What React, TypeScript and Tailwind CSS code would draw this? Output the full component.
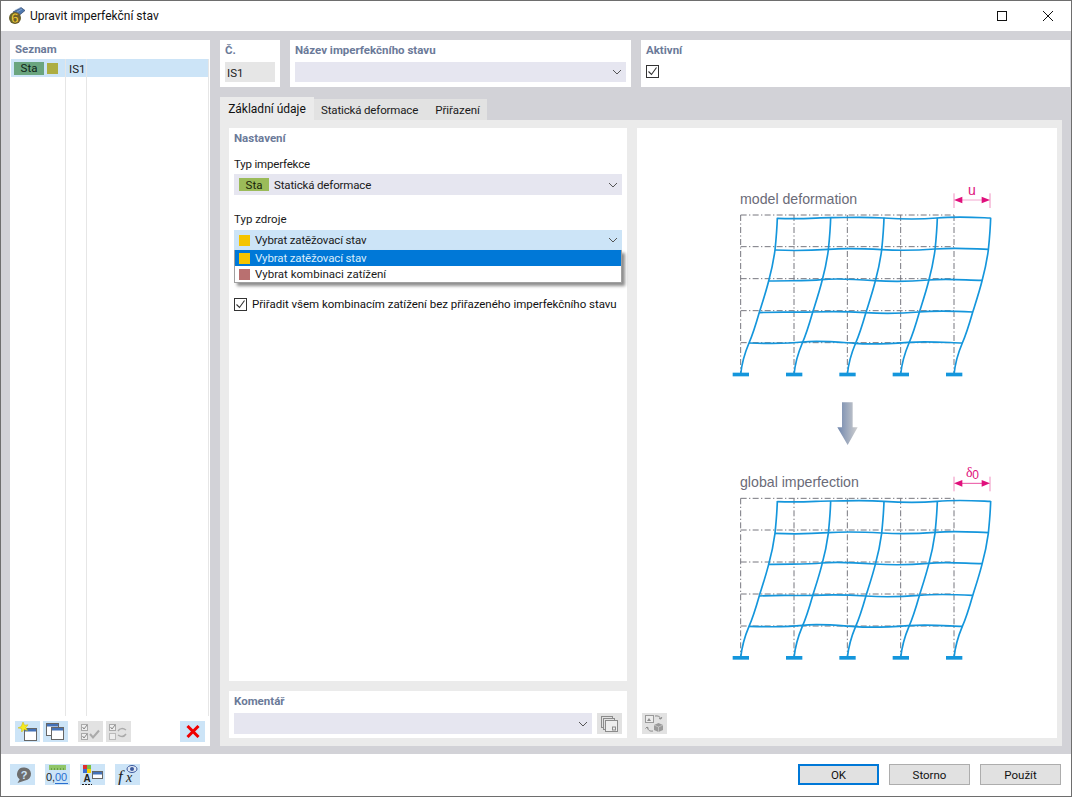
import { ReactNode } from 'react'

const FONT = 'font-["Roboto",sans-serif]'

const Chevron = () => (
  <svg width="10" height="6" viewBox="0 0 10 6" className="shrink-0">
    <path d="M1 1l4 4 4-4" fill="none" stroke="#555" strokeWidth="1" />
  </svg>
)

const Check = ({ className = '' }: { className?: string }) => (
  <div className={`w-[13px] h-[13px] border border-[#333] bg-white flex items-center justify-center shrink-0 ${className}`}>
    <svg width="11" height="11" viewBox="0 0 11 11">
      <path d="M1.5 5.5l3 3 5-7" fill="none" stroke="#333" strokeWidth="1.1" />
    </svg>
  </div>
)

const Swatch = ({ color }: { color: string }) => (
  <span className="w-[11px] h-[11px] shrink-0" style={{ backgroundColor: color }} />
)

const Panel = ({ title, className, children }: { title: string; className: string; children?: ReactNode }) => (
  <div className={`bg-white px-[5px] ${className}`}>
    <div className="h-[22px] pb-[3px] flex items-center font-bold text-[#6b7a99]">{title}</div>
    {children}
  </div>
)

const IconButton = ({ children, disabled, className = '' }: { children: ReactNode; disabled?: boolean; className?: string }) => (
  <div className={`w-[25px] h-[21px] flex items-center justify-center shrink-0 ${disabled ? 'bg-[#e2e2e2]' : 'bg-[#cce4f7]'} ${className}`}>
    {children}
  </div>
)

const Win = ({ x, y, w = 12, h = 12, stroke = '#666' }: { x: number; y: number; w?: number; h?: number; stroke?: string }) => (
  <g>
    <rect x={x + 0.5} y={y + 0.5} width={w} height={h} fill="#fff" stroke={stroke} />
    <rect x={x + 1} y={y + 1} width={w - 1} height="2.5" fill={stroke === '#666' ? '#4472b8' : '#b5b5b5'} />
  </g>
)

const NewIcon = () => (
  <svg width="21" height="19" viewBox="0 0 21 19">
    <Win x={7} y={6} />
    <path d="M6 0l1.500 3.200 3.500-.4-2.200 2.700 1.700 3-3.400-1-2.400 2.500-.2-3.500L1 5.900l3.200-1.300z" fill="#f5ea20" stroke="#cdb900" strokeWidth=".5" />
  </svg>
)

const CopyIcon = () => (
  <svg width="21" height="19" viewBox="0 0 21 19">
    <Win x={1} y={1} />
    <Win x={6} y={5} />
  </svg>
)

const CheckAllIcon = () => (
  <svg width="21" height="18" viewBox="0 0 21 18">
    <rect x="1.500" y="1.500" width="6" height="6" fill="#eee" stroke="#aaa" />
    <rect x="1.500" y="10.500" width="6" height="6" fill="#eee" stroke="#aaa" />
    <path d="M2.500 4l1.500 2 3-4M2.500 13l1.500 2 3-4" fill="none" stroke="#888" />
    <path d="M10 11l3 3.500 6-7" fill="none" stroke="#aaa" strokeWidth="2" />
  </svg>
)

const SwapIcon = () => (
  <svg width="21" height="18" viewBox="0 0 21 18">
    <rect x="1.500" y="1.500" width="6" height="6" fill="#eee" stroke="#aaa" />
    <rect x="1.500" y="10.500" width="6" height="6" fill="#eee" stroke="#bbb" />
    <path d="M2.500 4l1.500 2 3-4" fill="none" stroke="#888" />
    <path d="M10 8c2-3 5-3 8-1M18 11c-2 3-5 3-8 1" fill="none" stroke="#aaa" strokeWidth="1.500" />
  </svg>
)

const DeleteIcon = () => (
  <svg width="14" height="13" viewBox="0 0 14 13">
    <path d="M1.500 1l11 11M12.500 1l-11 11" stroke="#f00000" strokeWidth="3" />
  </svg>
)

const HelpIcon = () => (
  <svg width="18" height="18" viewBox="0 0 18 18">
    <path d="M10 1.500a6.500 6.500 0 0 1 1 13l-7.500 2.500 2.200-3.800A6.500 6.500 0 0 1 10 1.500z" fill="#6e6e6e" />
    <text x="10" y="12.500" textAnchor="middle" fontSize="11" fontWeight="700" fill="#cce4f7" fontFamily="Liberation Sans, sans-serif">?</text>
  </svg>
)

const UnitsIcon = () => (
  <svg width="25" height="20" viewBox="0 0 25 20">
    <rect x="4" y="0" width="17" height="5" fill="#90c66a" />
    <path d="M6.500 3v2M9.500 3v2M12.500 3v2M15.500 3v2M18.500 3v2" stroke="#6a9c48" />
    <text x="1" y="16" fontSize="11" fill="#222" fontFamily="Liberation Sans, sans-serif">0,</text>
    <text x="10" y="16" fontSize="11" fill="#2a6fd0" fontFamily="Liberation Sans, sans-serif">00</text>
    <path d="M10 18.500h13" stroke="#2a6fd0" />
  </svg>
)

const ColorsIcon = () => (
  <svg width="23" height="20" viewBox="0 0 23 20">
    <rect x="2" y="0" width="4" height="4" fill="#e03030" />
    <rect x="6" y="0" width="4" height="4" fill="#7ac143" />
    <rect x="2" y="4" width="4" height="4" fill="#3b6fd4" />
    <rect x="6" y="4" width="4" height="4" fill="#f5d000" />
    <Win x={11} y={6} w={10} h={7} />
    <text x="6" y="17" textAnchor="middle" fontSize="10" fontWeight="700" fill="#222" fontFamily="Liberation Sans, sans-serif">A</text>
    <path d="M1 19.500h10" stroke="#222" strokeDasharray="2 1" />
  </svg>
)

const FormulaIcon = () => (
  <svg width="23" height="21" viewBox="0 0 23 21">
    <text x="2" y="18" fontSize="17" fontStyle="italic" fill="#222" fontFamily="Liberation Serif, serif">f</text>
    <text x="10" y="18" fontSize="14" fontStyle="italic" fill="#222" fontFamily="Liberation Serif, serif">x</text>
    <ellipse cx="16" cy="5" rx="5" ry="3.500" fill="#dfe8f5" stroke="#3d5a9e" />
    <circle cx="16" cy="5" r="2" fill="#3d5a9e" />
  </svg>
)

const CopyDisabledIcon = () => (
  <svg width="19" height="18" viewBox="0 0 19 18">
    <rect x="1.500" y="1.500" width="11" height="11" fill="#e2e2e2" stroke="#8c8c8c" />
    <rect x="3.500" y="3.500" width="11" height="11" fill="#e2e2e2" stroke="#8c8c8c" />
    <rect x="5.500" y="5.500" width="12" height="11" fill="#eee" stroke="#8c8c8c" />
    <rect x="12.500" y="12" width="3" height="3" fill="none" stroke="#8c8c8c" />
  </svg>
)

const ResetViewIcon = () => (
  <svg width="21" height="19" viewBox="0 0 21 19">
    <rect x="1.500" y="1.500" width="8" height="7" fill="#ededed" stroke="#9a9a9a" />
    <path d="M3 7l2-3 2 3z" fill="#8c8c8c" />
    <path d="M11 2c3-.5 5 .5 6 3M17 5l-2-.5M17 5l.8-2" fill="none" stroke="#8c8c8c" />
    <path d="M9 17c-3 .500-5-.500-6-4M3 13l-1.500 1.500M3 13l1.700 1.300" fill="none" stroke="#8c8c8c" />
    <path d="M10 11l4.500-2 4.500 2v5l-4.500 2-4.500-2z" fill="#9a9a9a" />
    <path d="M10 11l4.500 2 4.500-2M14.500 13v5" fill="none" stroke="#d0d0d0" strokeWidth=".7" />
  </svg>
)

const AppIcon = () => (
  <svg width="18" height="18" viewBox="0 0 18 18">
    <path d="M5 5l8-4.500 4 3-6 5z" fill="#4f78ae" stroke="#2f4468" strokeWidth=".7" />
    <path d="M7 3l6-2.500M9 5l5-3" stroke="#a8c4e4" strokeWidth=".6" />
    <circle cx="7" cy="11" r="6" fill="#6a6230" />
    <text x="7" y="16" textAnchor="middle" fontSize="14" fontWeight="700" fill="#f0cb3a" stroke="#4a4218" strokeWidth=".4" fontFamily="Liberation Sans, sans-serif">6</text>
  </svg>
)

const BLUE = '#1496dc'
const columnPath = 'M62 583C66 545 76 515 87 489C100 460 110 425 118 397C128 365 138 335 146 303C155 270 161 240 165 210C168 180 171 150 172 113'

const Frame = ({ dy }: { dy: number }) => (
  <g transform={`translate(0 ${dy})`}>
    <g fill="none" stroke="#77777f" strokeWidth="3" strokeDasharray="18 7 4 7">
      {[62, 222, 382, 542, 702].map((x) => (
        <path key={x} d={`M${x} 105V583`} />
      ))}
      {[105, 200, 296, 392, 488].map((y) => (
        <path key={y} d={`M62 ${y}H702`} />
      ))}
    </g>
    <g fill="none" stroke={BLUE} strokeWidth="5">
      {[0, 160, 320, 480, 640].map((x) => (
        <path key={x} d={columnPath} transform={`translate(${x} 0)`} />
      ))}
      <path d="M172 115C250 118 290 113 332 113S430 110 491 114S590 119 651 114S760 112 812 114" />
      <path d="M165 210C230 213 280 211 325 208S430 206 485 209S580 212 645 207S750 206 805 208" />
      <path d="M146 303C210 301 260 304 305 299S410 298 465 302S570 305 625 300S730 300 786 301" />
      <path d="M118 398C190 394 230 398 277 396S380 394 437 398S540 401 597 396S700 393 758 396" />
      <path d="M87 489C150 491 200 492 247 486S350 486 405 490S510 491 565 487S670 487 727 489" />
    </g>
    <g fill={BLUE}>
      {[38, 198, 358, 518, 678].map((x) => (
        <rect key={x} x={x} y="578" width="49" height="11" />
      ))}
    </g>
  </g>
)

const Dimension = ({ y, line, tick }: { y: number; line: string; tick: string }) => (
  <g>
    <path d={`M702 ${y - 18}V${y + 26}M810 ${y - 18}V${y + 26}`} stroke={tick} strokeWidth="3" />
    <path d={`M725 ${y + 2}H788`} stroke={line} strokeWidth="3" />
    <path d={`M702 ${y + 2}l25-10v20zM810 ${y + 2}l-25-10v20z`} fill="#e0107c" />
  </g>
)

const Diagram = () => (
  <svg width="290" height="490" viewBox="0 0 870 1470" className="block">
    <defs>
      <linearGradient id="arrow" x1="0" x2="1" y1="0" y2="0">
        <stop offset="0" stopColor="#6f86ad" />
        <stop offset="1" stopColor="#cfcfcf" />
      </linearGradient>
    </defs>
    <text x="60" y="71" fontSize="42.500" fill="#6b6b78" fontFamily="Liberation Sans, sans-serif">model deformation</text>
    <Frame dy={0} />
    <Dimension y={58} line="#f4a6cf" tick="#f08fc0" />
    <text x="756" y="44" textAnchor="middle" fontSize="42" fill="#e0107c" fontFamily="Liberation Sans, sans-serif">u</text>
    <path d="M366 667H398V742H413L383 795L352 742H366Z" fill="url(#arrow)" />
    <text x="60" y="921" fontSize="42.500" fill="#6b6b78" fontFamily="Liberation Sans, sans-serif">global imperfection</text>
    <Frame dy={850} />
    <Dimension y={908} line="#ea4fa0" tick="#f08fc0" />
    <text x="738" y="892" fontSize="42" fill="#e0107c" fontFamily="Liberation Serif, serif">δ</text>
    <text x="757" y="897" fontSize="36" fill="#e0107c" fontFamily="Liberation Sans, sans-serif">0</text>
  </svg>
)

const FooterButton = ({ label, primary }: { label: string; primary?: boolean }) => (
  <div className={`w-[81px] h-[21px] flex items-center justify-center bg-[#e1e1e1] text-[#111] ${primary ? 'border-2 border-[#0078d7]' : 'border border-[#adadad]'}`}>
    {label}
  </div>
)

export default function App() {
  return (
    <div className={`w-[1072px] h-[797px] flex flex-col border border-[#6e6e6e] bg-white text-[11.5px] leading-[16px] text-[#1a1a1a] overflow-hidden whitespace-nowrap ${FONT}`}>
      {/* title bar */}
      <div className="h-[30px] flex items-center pl-[7px] shrink-0">
        <AppIcon />
        <span className="ml-[4px] text-[12px] text-[#111]">Upravit imperfekční stav</span>
        <div className="ml-auto flex items-center">
          <svg width="12" height="12" viewBox="0 0 12 12" className="mr-[34px]">
            <rect x="1.500" y="1.500" width="9" height="9" fill="none" stroke="#111" />
          </svg>
          <svg width="12" height="12" viewBox="0 0 12 12" className="mr-[17px]">
            <path d="M1 1l10 10M11 1L1 11" stroke="#111" />
          </svg>
        </div>
      </div>

      {/* main area */}
      <div className="flex-1 bg-[#d2d2d7] flex pt-[9px] pb-[8px] pl-[9px] pr-px min-h-0">
        {/* list */}
        <div className="w-[200px] bg-white flex flex-col shrink-0 mr-[10px]">
          <div className="h-[19px] px-[5px] pb-px flex items-center font-bold text-[#6b7a99]">Seznam</div>
          <div className="flex-1 relative px-px">
            <div className="h-[18px] w-[197px] bg-[#cce4f7] flex items-center pl-[3px]">
              <span className="w-[30px] h-[13px] bg-[#6aa57f] text-[#10241a] flex items-center justify-center">Sta</span>
              <span className="w-[11px] h-[11px] bg-[#adad42] ml-[3px]" />
              <span className="ml-[11px] mt-px">IS1</span>
            </div>
            <div className="absolute left-[55px] top-0 h-[657px] w-px bg-[#e6e6e6]" />
            <div className="absolute left-[76px] top-0 h-[657px] w-px bg-[#e6e6e6]" />
            <div className="absolute right-px top-0 h-[657px] w-px bg-[#e6e6e6]" />
          </div>
          <div className="h-[25px] pl-[5px] pr-[5px] flex items-start gap-[3px]">
            <IconButton><NewIcon /></IconButton>
            <IconButton><CopyIcon /></IconButton>
            <IconButton disabled className="ml-[7px]"><CheckAllIcon /></IconButton>
            <IconButton disabled><SwapIcon /></IconButton>
            <IconButton className="ml-auto"><DeleteIcon /></IconButton>
          </div>
        </div>

        {/* right side */}
        <div className="flex-1 min-w-0 flex flex-col">
          <div className="h-[47px] flex gap-[10px] shrink-0">
            <Panel title="Č." className="w-[60px]">
              <div className="h-[20px] w-[50px] bg-[#e6e6e6] flex items-center px-[2px] pt-px">IS1</div>
            </Panel>
            <Panel title="Název imperfekčního stavu" className="w-[341px]">
              <div className="h-[20px] bg-[#e6e6f0] flex items-center justify-end pr-[4px]"><Chevron /></div>
            </Panel>
            <Panel title="Aktivní" className="flex-1">
              <Check className="mt-[3px]" />
            </Panel>
          </div>

          <div className="flex h-[23px] mt-[10px] items-end shrink-0">
            <div className="h-[23px] w-[94px] bg-[#ebebeb] flex items-center justify-center text-[12px] text-[#111]">Základní údaje</div>
            <div className="h-[21px] w-[173px] bg-[#e2e2e2] flex items-center pl-[7px] gap-[17px]">
              <span className="tracking-[-0.15px]">Statická deformace</span>
              <span>Přiřazení</span>
            </div>
          </div>

          <div className="flex-1 min-h-0 w-[842px] bg-[#ebebeb] flex gap-[10px] pt-[8px] pb-[8px] pl-[9px] pr-[5px]">
            <div className="w-[398px] flex flex-col gap-[10px]">
              <Panel title="Nastavení" className="flex-1 relative">
                <div className="mt-[5px] h-[18px] flex items-center tracking-[-0.18px]">Typ imperfekce</div>
                <div className="mt-px h-[21px] bg-[#e6e6f0] flex items-center pl-[5px] pr-[4px]">
                  <span className="w-[30px] h-[13px] bg-[#9bbb59] text-[#1a2408] flex items-center justify-center">Sta</span>
                  <span className="ml-[5px] flex-1 tracking-[-0.15px]">Statická deformace</span>
                  <Chevron />
                </div>
                <div className="mt-[15px] h-[18px] flex items-center">Typ zdroje</div>
                <div className="mt-[2px] h-[20px] bg-[#cce4f7] flex items-center pl-[5px] pr-[4px]">
                  <Swatch color="#f5c400" />
                  <span className="ml-[5px] flex-1 tracking-[-0.14px]">Vybrat zatěžovací stav</span>
                  <Chevron />
                </div>
                <div className="absolute left-[5px] right-[5px] top-[122px] h-[33px] border border-t-0 border-[#a0a0a0] bg-white shadow-[3px_3px_3px_rgba(0,0,0,0.45)]">
                  <div className="h-[16px] bg-[#0078d7] flex items-center pl-[4px] text-white">
                    <Swatch color="#f5c400" />
                    <span className="ml-[5px] text-[#d8ecfb] tracking-[-0.14px]">Vybrat zatěžovací stav</span>
                  </div>
                  <div className="h-[16px] flex items-center pl-[4px]">
                    <Swatch color="#b97070" />
                    <span className="ml-[5px]">Vybrat kombinaci zatížení</span>
                  </div>
                </div>
                <div className="mt-[46px] flex items-center gap-[5px]">
                  <Check />
                  <span className="text-[#111] tracking-[-0.03px]">Přiřadit všem kombinacím zatížení bez přiřazeného imperfekčního stavu</span>
                </div>
              </Panel>
              <Panel title="Komentář" className="h-[47px] shrink-0">
                <div className="flex gap-[5px]">
                  <div className="flex-1 h-[21px] bg-[#e6e6f0] flex items-center justify-end pr-[4px]"><Chevron /></div>
                  <IconButton disabled><CopyDisabledIcon /></IconButton>
                </div>
              </Panel>
            </div>

            <div className="w-[420px] bg-white flex flex-col justify-between pt-[52px] pb-[4px] pl-[5px]">
              <div className="pl-[78px]"><Diagram /></div>
              <IconButton disabled><ResetViewIcon /></IconButton>
            </div>
          </div>
        </div>
      </div>

      {/* footer */}
      <div className="h-[42px] shrink-0 flex items-start pt-[10px] pl-[9px] pr-[10px]">
        <div className="flex gap-[10px]">
          <IconButton><HelpIcon /></IconButton>
          <IconButton><UnitsIcon /></IconButton>
          <IconButton><ColorsIcon /></IconButton>
          <IconButton><FormulaIcon /></IconButton>
        </div>
        <div className="ml-auto flex gap-[10px]">
          <FooterButton label="OK" primary />
          <FooterButton label="Storno" />
          <FooterButton label="Použít" />
        </div>
      </div>
    </div>
  )
}
